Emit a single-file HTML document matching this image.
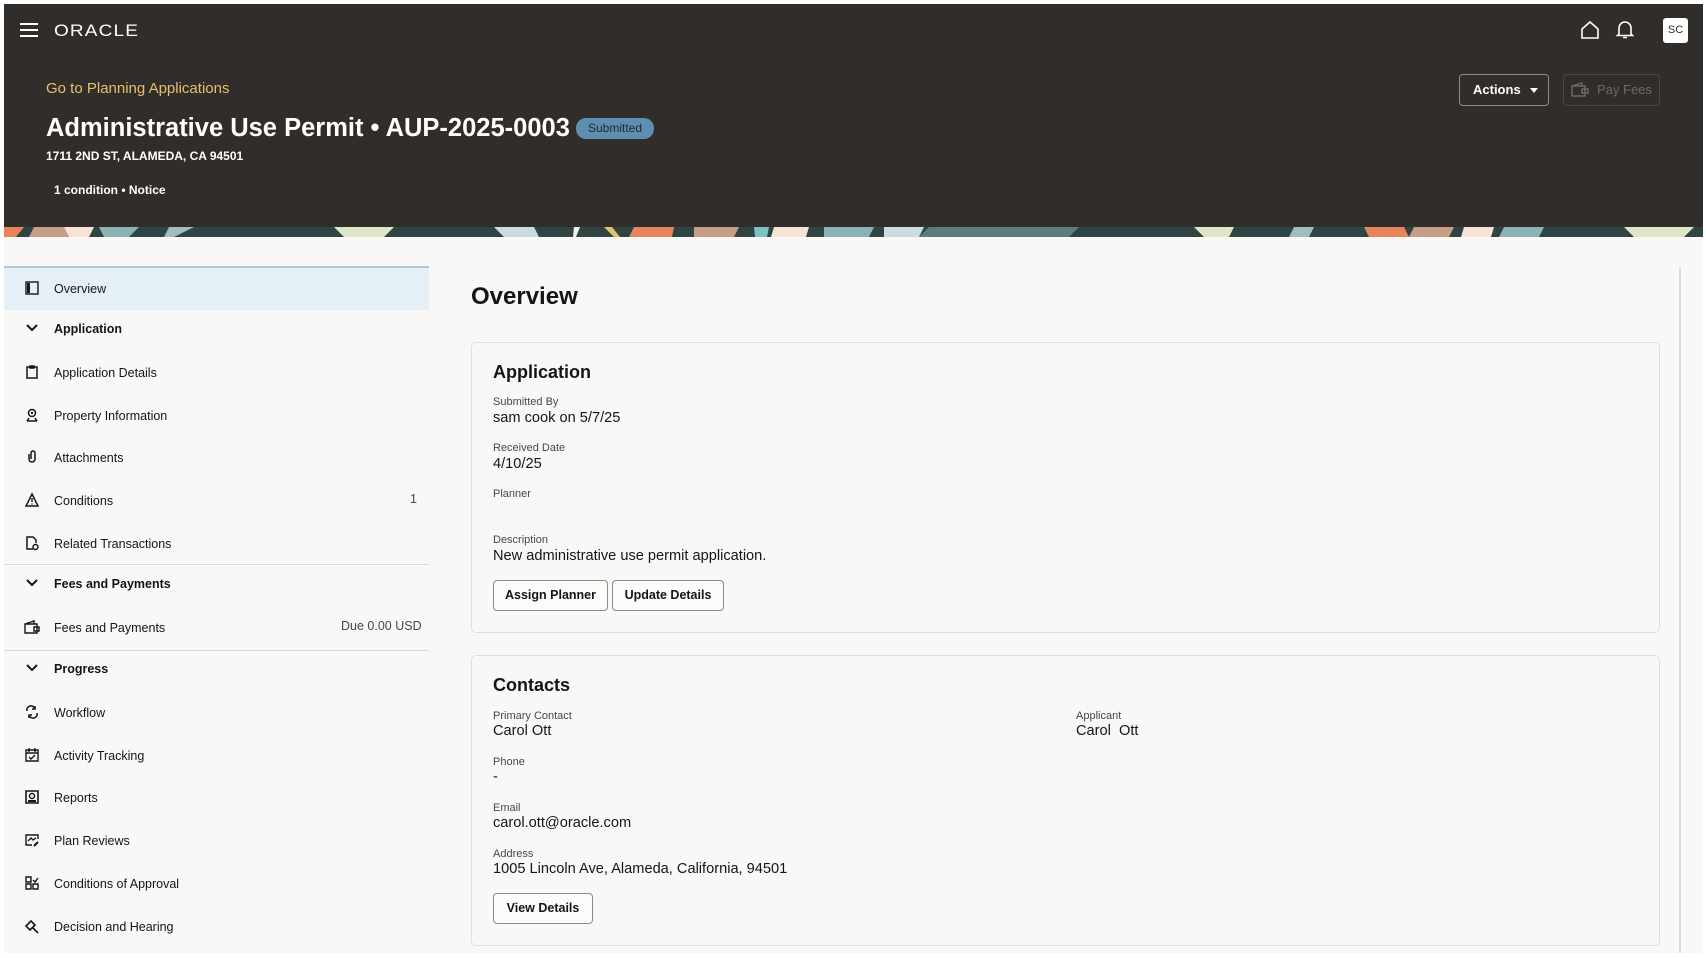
<!DOCTYPE html>
<html><head><meta charset="utf-8">
<style>
*{box-sizing:border-box;margin:0;padding:0}
body{width:1706px;height:958px;background:#fff;font-family:"Liberation Sans",sans-serif;color:#161513;position:relative;overflow:hidden}
.a{position:absolute;white-space:nowrap}
#hdr{position:absolute;left:4px;top:4px;width:1699px;height:223px;background:#312d2a}
#page{position:absolute;left:4px;top:237px;width:1699px;height:716px;background:#f9f8f6}
.nav{position:absolute;left:4px;width:425px;font-size:12.5px;color:#161513}
.nav .ic{position:absolute;left:20px;top:-2px;width:16px;height:16px}
.nav .t{position:absolute;left:50px;top:0}
.div{position:absolute;left:4px;width:425px;height:1px;background:#dcdad7}
.card{position:absolute;left:471px;width:1189px;border:1px solid #e2dfdb;border-radius:5px;background:#f9f8f6}
.lbl{position:absolute;left:493px;font-size:11px;color:#4a4745}
.val{position:absolute;left:493px;font-size:14.6px;color:#161513}
.btn{position:absolute;border:1px solid #8e8b87;border-radius:4px;background:#fcfbfa;font-size:12.5px;font-weight:bold;text-align:center;color:#161513}
</style></head><body>
<div id="hdr"></div>
<div class="a" style="left:20px;top:23px;width:18px;height:2px;background:#fff"></div>
<div class="a" style="left:20px;top:29px;width:18px;height:2px;background:#fff"></div>
<div class="a" style="left:20px;top:35px;width:18px;height:2px;background:#fff"></div>
<div class="a" style="left:54px;top:21px;font-size:17px;color:#fff;letter-spacing:1px;transform:scaleX(1.12);transform-origin:left">ORACLE</div>
<svg class="a" style="left:1580px;top:20px" width="20" height="20" viewBox="0 0 20 20"><path d="M2 9 L10 2 L18 9 V18 H2 Z" fill="none" stroke="#fff" stroke-width="1.6"/></svg>
<svg class="a" style="left:1615px;top:19px" width="20" height="22" viewBox="0 0 20 22"><path d="M4 15 V9 a6 6 0 0 1 12 0 V15 L17.5 16.5 H2.5 Z M8 18.5 h4" fill="none" stroke="#fff" stroke-width="1.6"/></svg>
<div class="a" style="left:1663px;top:18px;width:25px;height:25px;background:#fff;border-radius:3px;font-size:11px;color:#312d2a;text-align:center;line-height:25px">SC</div>
<div class="a" style="left:46px;top:80px;font-size:15px;color:#e6c06d">Go to Planning Applications</div>
<div class="a" style="left:46px;top:114px;font-size:25.5px;font-weight:bold;color:#fff">Administrative Use Permit • AUP-2025-0003</div>
<div class="a" style="left:576px;top:118px;width:78px;height:21px;border-radius:10px;background:#5f8fb0;font-size:12px;color:#1c2a33;text-align:center;line-height:21px">Submitted</div>
<div class="a" style="left:46px;top:149px;font-size:12px;font-weight:bold;color:#fff">1711 2ND ST, ALAMEDA, CA 94501</div>
<div class="a" style="left:54px;top:183px;font-size:12px;font-weight:bold;color:#fff">1 condition • Notice</div>
<div class="a" style="left:1459px;top:74px;width:90px;height:32px;border:1px solid #8e8b87;border-radius:4px;font-size:13px;font-weight:bold;color:#fff;line-height:30px;padding-left:13px">Actions <span style="display:inline-block;margin-left:6px;border-left:4px solid transparent;border-right:4px solid transparent;border-top:5px solid #fff;vertical-align:middle"></span></div>
<div class="a" style="left:1563px;top:74px;width:97px;height:32px;border:1px solid #4a4643;border-radius:4px;font-size:13px;color:#6e6a66;line-height:30px;padding-left:33px">Pay Fees</div>
<svg class="a" style="left:1571px;top:82px" width="18" height="16" viewBox="0 0 18 16"><path d="M1 4 H14 V14 H1 Z M1 4 L11 1 V4 M11 7 H17 V11 H11 Z" fill="none" stroke="#6e6a66" stroke-width="1.4"/></svg>
<svg class="a" style="left:4px;top:227px" width="1699" height="10" viewBox="0 0 1699 10" preserveAspectRatio="none">
<rect width="1699" height="10" fill="#2f4544"/>
<g>
<path d="M0 0h20l-8 10H0z" fill="#e8845a"/><path d="M30 0h30l5 10H25z" fill="#c79f86"/><path d="M60 0h30l-5 10H65z" fill="#f7e2d6"/><path d="M95 0h40l-10 10h-25z" fill="#89b3b5"/>
<path d="M165 0h25l-20 10h-10z" fill="#a0bdbe"/><path d="M330 0h60l-10 10h-40z" fill="#dfe6c8"/><path d="M490 0h40l5 10h-35z" fill="#c9dde0"/>
<path d="M570 0h6l-4 10h-3z" fill="#f0f0f0"/><path d="M600 0h8l8 10h-6z" fill="#e6c06d"/><path d="M630 0h40l-2 10h-43z" fill="#e8845a"/>
<path d="M690 0h45l-5 10h-40z" fill="#c79f86"/><path d="M750 0h15l-2 10h-12z" fill="#7cc4c4"/><path d="M770 0h35l-3 10h-35z" fill="#f7e2d6"/>
<path d="M820 0h50l-5 10h-45z" fill="#89b3b5"/><path d="M880 0h40l-5 10h-35z" fill="#c9dde0"/><path d="M925 0h150l-10 10H915z" fill="#5b7e7c"/>
<path d="M1190 0h40l-5 10h-25z" fill="#dfe6c8"/><path d="M1290 0h20l-5 10h-20z" fill="#a0bdbe"/><path d="M1360 0h40l5 10h-40z" fill="#e8845a"/>
<path d="M1410 0h40l-5 10h-40z" fill="#c79f86"/><path d="M1460 0h30l-3 10h-30z" fill="#f7e2d6"/><path d="M1500 0h40l-5 10h-40z" fill="#89b3b5"/>
<path d="M1620 0h70l-10 10h-50z" fill="#dfe6c8"/>
</g></svg>
<div id="page"></div>
<div class="a" style="left:4px;top:266px;width:425px;height:44px;background:#e4f0f5;border-top:2px solid #a9cad9"></div>
<div class="nav" style="top:282px"><svg class="ic" viewBox="0 0 16 16"><rect x="2" y="2" width="12" height="12" fill="none" stroke="#161513" stroke-width="1.4"/><rect x="3" y="3" width="3" height="10" fill="#161513"/></svg><span class="t">Overview</span></div>
<div class="nav" style="top:322px;font-weight:bold"><svg class="ic" viewBox="0 0 16 16"><path d="M3 5 L8 10 L13 5" fill="none" stroke="#161513" stroke-width="2"/></svg><span class="t">Application</span></div>
<div class="nav" style="top:366px"><svg class="ic" viewBox="0 0 16 16"><path d="M3 3h10v11H3z M6 2h4v2H6z" fill="none" stroke="#161513" stroke-width="1.5"/></svg><span class="t">Application Details</span></div>
<div class="nav" style="top:409px"><svg class="ic" viewBox="0 0 16 16"><circle cx="8" cy="6" r="3.5" fill="none" stroke="#161513" stroke-width="1.5"/><circle cx="8" cy="6" r="1.2" fill="#161513"/><path d="M3 14h10M5 11l-2 3M11 11l2 3" stroke="#161513" stroke-width="1.5"/></svg><span class="t">Property Information</span></div>
<div class="nav" style="top:451px"><svg class="ic" viewBox="0 0 16 16"><path d="M5 5v5a3 3 0 0 0 6 0V4a2 2 0 0 0-4 0v6" fill="none" stroke="#161513" stroke-width="1.5"/></svg><span class="t">Attachments</span></div>
<div class="nav" style="top:494px"><svg class="ic" viewBox="0 0 16 16"><path d="M8 2 L14 14 H2 Z" fill="none" stroke="#161513" stroke-width="1.5"/><path d="M8 6v4M8 11.5v1" stroke="#161513" stroke-width="1.4"/></svg><span class="t">Conditions</span><span class="a" style="left:406px;top:-2px;color:#4a4745">1</span></div>
<div class="nav" style="top:537px"><svg class="ic" viewBox="0 0 16 16"><path d="M9 14H3V2h6l3 3v3" fill="none" stroke="#161513" stroke-width="1.5"/><circle cx="11.5" cy="12" r="2.5" fill="none" stroke="#161513" stroke-width="1.4"/></svg><span class="t">Related Transactions</span></div>
<div class="div" style="top:564px"></div>
<div class="nav" style="top:577px;font-weight:bold"><svg class="ic" viewBox="0 0 16 16"><path d="M3 5 L8 10 L13 5" fill="none" stroke="#161513" stroke-width="2"/></svg><span class="t">Fees and Payments</span></div>
<div class="nav" style="top:621px"><svg class="ic" viewBox="0 0 16 16"><path d="M1 5H13V14H1Z M1 5L10 2V5 M10 8H15V12H10Z" fill="none" stroke="#161513" stroke-width="1.4"/></svg><span class="t">Fees and Payments</span><span class="a" style="left:337px;top:-2px;color:#4a4745">Due 0.00 USD</span></div>
<div class="div" style="top:650px"></div>
<div class="nav" style="top:662px;font-weight:bold"><svg class="ic" viewBox="0 0 16 16"><path d="M3 5 L8 10 L13 5" fill="none" stroke="#161513" stroke-width="2"/></svg><span class="t">Progress</span></div>
<div class="nav" style="top:706px"><svg class="ic" viewBox="0 0 16 16"><path d="M3 7a4 4 0 0 1 8-2M13 9a4 4 0 0 1-8 2M11 2v3h-3M5 14v-3h3" fill="none" stroke="#161513" stroke-width="1.5"/></svg><span class="t">Workflow</span></div>
<div class="nav" style="top:749px"><svg class="ic" viewBox="0 0 16 16"><path d="M2 3h12v11H2z M2 6h12 M5 1v4 M11 1v4 M5 10l2 2 4-4" fill="none" stroke="#161513" stroke-width="1.4"/></svg><span class="t">Activity Tracking</span></div>
<div class="nav" style="top:791px"><svg class="ic" viewBox="0 0 16 16"><path d="M2 2h12v12H2z" fill="none" stroke="#161513" stroke-width="1.6"/><circle cx="8" cy="7" r="2.5" fill="none" stroke="#161513" stroke-width="1.4"/><path d="M4 12h8" stroke="#161513" stroke-width="2"/></svg><span class="t">Reports</span></div>
<div class="nav" style="top:834px"><svg class="ic" viewBox="0 0 16 16"><path d="M8 13H2V3h12v4 M4 9l3-3 2 2 3-2" fill="none" stroke="#161513" stroke-width="1.4"/><path d="M10 14l4-4" stroke="#161513" stroke-width="2"/></svg><span class="t">Plan Reviews</span></div>
<div class="nav" style="top:877px"><svg class="ic" viewBox="0 0 16 16"><path d="M2 2h5v5H2z M2 9h5v5H2z M9 9h5v5H9z M9 5l2 2 3-4" fill="none" stroke="#161513" stroke-width="1.4"/></svg><span class="t">Conditions of Approval</span></div>
<div class="nav" style="top:920px"><svg class="ic" viewBox="0 0 16 16"><path d="M2 8l5-5 4 4-5 5z M9 10l5 5" fill="none" stroke="#161513" stroke-width="1.6"/></svg><span class="t">Decision and Hearing</span></div>
<div class="a" style="left:1679px;top:268px;width:2px;height:685px;background:#dcdad7"></div>
<div class="a" style="left:471px;top:283px;font-size:24px;font-weight:bold">Overview</div>
<div class="card" style="top:342px;height:291px"></div>
<div class="a" style="left:493px;top:362px;font-size:18px;font-weight:bold">Application</div>
<div class="lbl" style="top:396px">Submitted By</div><div class="val" style="top:410px">sam cook on 5/7/25</div>
<div class="lbl" style="top:442px">Received Date</div><div class="val" style="top:456px">4/10/25</div>
<div class="lbl" style="top:488px">Planner</div>
<div class="lbl" style="top:534px">Description</div><div class="val" style="top:548px">New administrative use permit application.</div>
<div class="btn" style="left:493px;top:580px;width:115px;height:31px;line-height:29px">Assign Planner</div>
<div class="btn" style="left:612px;top:580px;width:112px;height:31px;line-height:29px">Update Details</div>
<div class="card" style="top:655px;height:291px"></div>
<div class="a" style="left:493px;top:675px;font-size:18px;font-weight:bold">Contacts</div>
<div class="lbl" style="top:710px">Primary Contact</div><div class="val" style="top:723px">Carol Ott</div>
<div class="lbl" style="left:1076px;top:710px">Applicant</div><div class="val" style="left:1076px;top:723px">Carol&nbsp; Ott</div>
<div class="lbl" style="top:756px">Phone</div><div class="val" style="top:769px">-</div>
<div class="lbl" style="top:802px">Email</div><div class="val" style="top:815px">carol.ott@oracle.com</div>
<div class="lbl" style="top:848px">Address</div><div class="val" style="top:861px">1005 Lincoln Ave, Alameda, California, 94501</div>
<div class="btn" style="left:493px;top:893px;width:100px;height:31px;line-height:29px">View Details</div>
</body></html>
